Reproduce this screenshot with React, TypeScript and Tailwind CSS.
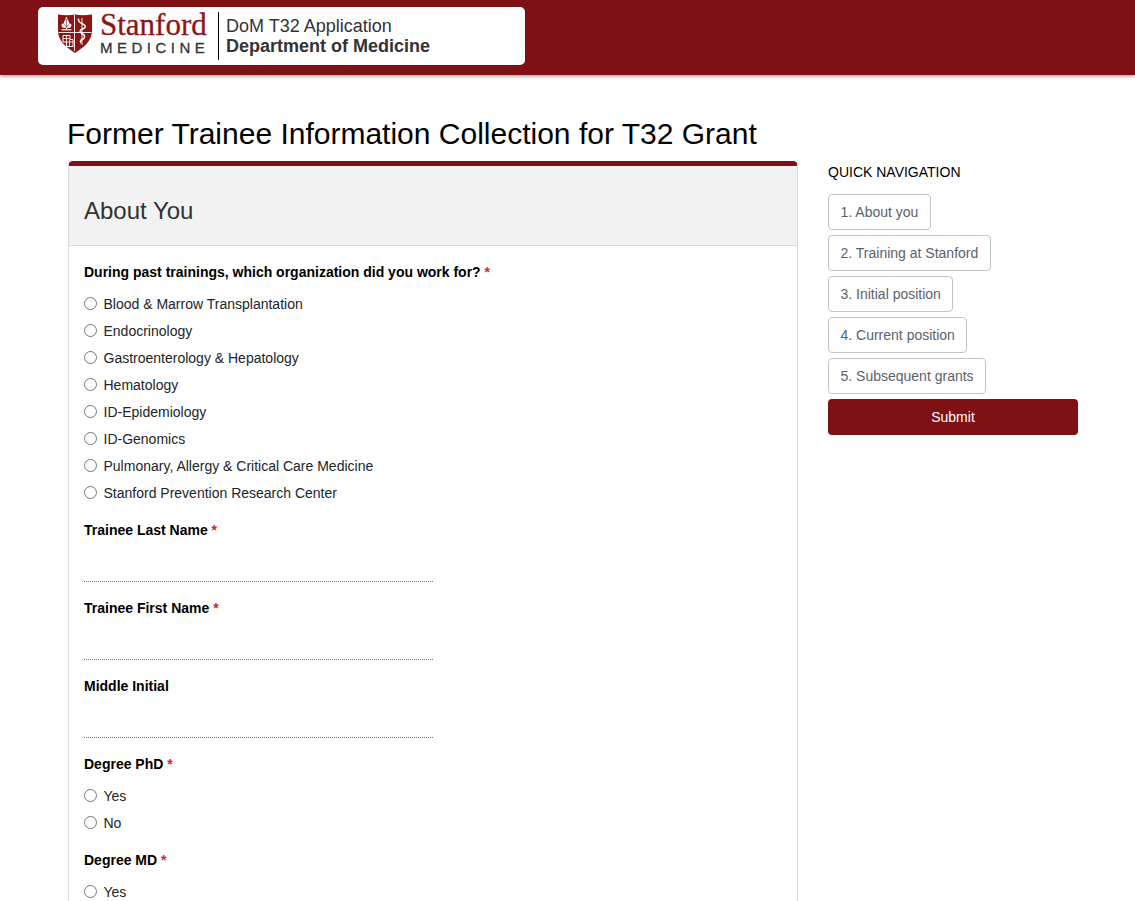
import type { ReactNode } from "react";

const orgs = [
  "Blood & Marrow Transplantation",
  "Endocrinology",
  "Gastroenterology & Hepatology",
  "Hematology",
  "ID-Epidemiology",
  "ID-Genomics",
  "Pulmonary, Allergy & Critical Care Medicine",
  "Stanford Prevention Research Center",
];

const navItems = [
  "1. About you",
  "2. Training at Stanford",
  "3. Initial position",
  "4. Current position",
  "5. Subsequent grants",
];

function Shield() {
  return (
    <svg viewBox="0 0 34 39" className="mb-[5px] h-[39px] w-[34px] shrink-0" aria-hidden>
      <path d="M0 0.5C6 1.5 12 1.5 17 0.5C22 1.5 28 1.5 34 0.5V17C34 27 25 34 17 39C9 34 0 27 0 17Z" fill="#8c1515" />
      <path d="M16.5 1V37M0.5 18.5H33.5" stroke="#fff" strokeWidth="0.9" fill="none" />
      {/* tree */}
      <path d="M8.5 3V15.5" stroke="#fff" strokeWidth="1.3" />
      <path d="M8.5 4C6.5 6.5 5.5 8 6 9.5C3.5 9 3 11 4 13C5.5 14 7 14 8.5 13.5C10 14 11.5 14 13 13C14 11 13.5 9 11 9.5C11.5 8 10.5 6.5 8.5 4Z" fill="#fff" />
      <path d="M3.5 15.8H13.5" stroke="#fff" strokeWidth="1.1" />
      <path d="M8.5 5V14M6 10.5L8.5 12.5L11 10.5" stroke="#8c1515" strokeWidth="0.6" fill="none" />
      {/* staff and snake */}
      <path d="M24 4V31" stroke="#fff" strokeWidth="0.9" />
      <path d="M20.5 4.5C20 7 21.5 8.5 24 9.5C27.5 11 28.5 13 25.5 14.5C21.5 16 21 18 24 19.5C27.5 21 27.5 24 24 25.5C22.5 26.2 22 27.5 23 29" stroke="#fff" strokeWidth="1.5" fill="none" />
      {/* book */}
      <path d="M5 21.5H12V25.5H15V32.5H8.5V28H5Z" fill="none" stroke="#fff" strokeWidth="1" />
      <path d="M5 24.5H12M8.5 21.5V28H15M11.5 25.5V32.5" fill="none" stroke="#fff" strokeWidth="0.8" />
    </svg>
  );
}

function Required() {
  return <span className="text-[#e02020]"> *</span>;
}

function Label({ children, required }: { children: ReactNode; required?: boolean }) {
  return (
    <p className="text-sm leading-5 font-bold text-black">
      {children}
      {required && <Required />}
    </p>
  );
}

function RadioRow({ name, label }: { name: string; label: string }) {
  return (
    <label className="flex h-[27px] items-center text-sm text-[#212529]">
      <input
        type="radio"
        name={name}
        className="mr-[6.5px] mb-[2px] h-[13px] w-[13px] appearance-none rounded-full border border-[#767676] bg-white"
      />
      {label}
    </label>
  );
}

function TextField({ label, required }: { label: string; required?: boolean }) {
  return (
    <div className="mb-4">
      <Label required={required}>{label}</Label>
      <input type="text" className="block h-[42px] w-[349px] border-b border-dotted border-[#777] outline-none" />
    </div>
  );
}

export default function App() {
  return (
    <div className="h-[901px] overflow-hidden bg-white font-['Liberation_Sans',Arial,sans-serif]">
      <header className="h-[75px] bg-[#7f1114] pt-[7px] pl-[38px] shadow-[0_1px_4px_rgba(0,0,0,0.45)]">
        <div className="flex h-[58px] w-[487px] items-center rounded-[5px] bg-white pl-5">
          <Shield />
          <div className="mb-2 ml-2 w-[110px] shrink-0">
            <div className="font-['Liberation_Serif',serif] text-[31px] leading-[30px] text-[#8c1515] [-webkit-text-stroke:0.3px_#8c1515]">
              Stanford
            </div>
            <div className="text-[15px] leading-[15px] tracking-[4.5px] whitespace-nowrap text-[#333] [-webkit-text-stroke:0.3px_#333]">
              MEDICINE
            </div>
          </div>
          <div className="ml-[8px] h-12 w-px bg-black" />
          <div className="ml-[7px] text-[18px] leading-[20px] text-[#333]">
            <div>DoM T32 Application</div>
            <div className="font-bold">Department of Medicine</div>
          </div>
        </div>
      </header>

      <main className="pl-[67px]">
        <h1 className="mt-[41px] mb-[9px] text-[30px] leading-9 text-black">
          Former Trainee Information Collection for T32 Grant
        </h1>
        <div className="ml-px flex items-start">
          <section className="w-[730px] shrink-0 rounded-t-[5px] border-x border-[#d9d9d9] border-t-[5px] border-t-[#7f1114]">
            <div className="flex h-[80px] items-center border-b border-[#d9d9d9] bg-[#f2f2f2] pt-[11px] pl-[15px] text-2xl text-[#333]">
              About You
            </div>
            <div className="pt-4 pl-[15px]">
              <div className="mb-[13.5px]">
                <div className="mb-[8.5px]">
                  <Label required>During past trainings, which organization did you work for?</Label>
                </div>
                {orgs.map((o) => (
                  <RadioRow key={o} name="org" label={o} />
                ))}
              </div>
              <TextField label="Trainee Last Name" required />
              <TextField label="Trainee First Name" required />
              <TextField label="Middle Initial" />
              <div className="mb-[13.5px]">
                <div className="mb-[8.5px]">
                  <Label required>Degree PhD</Label>
                </div>
                <RadioRow name="phd" label="Yes" />
                <RadioRow name="phd" label="No" />
              </div>
              <div>
                <div className="mb-[8.5px]">
                  <Label required>Degree MD</Label>
                </div>
                <RadioRow name="md" label="Yes" />
                <RadioRow name="md" label="No" />
              </div>
            </div>
          </section>

          <aside className="mt-px ml-[30px] w-[250px] shrink-0">
            <p className="mb-3 text-sm leading-5 text-black">QUICK NAVIGATION</p>
            <div className="flex flex-col items-start gap-[5px]">
              {navItems.map((n) => (
                <button
                  key={n}
                  type="button"
                  className="h-9 rounded-[4px] border border-[#c4c4c4] bg-white px-[11.5px] text-sm whitespace-nowrap text-[#5a6268]"
                >
                  {n}
                </button>
              ))}
              <button type="button" className="h-9 w-full rounded-[4px] bg-[#7f1114] text-sm text-white">
                Submit
              </button>
            </div>
          </aside>
        </div>
      </main>
    </div>
  );
}
